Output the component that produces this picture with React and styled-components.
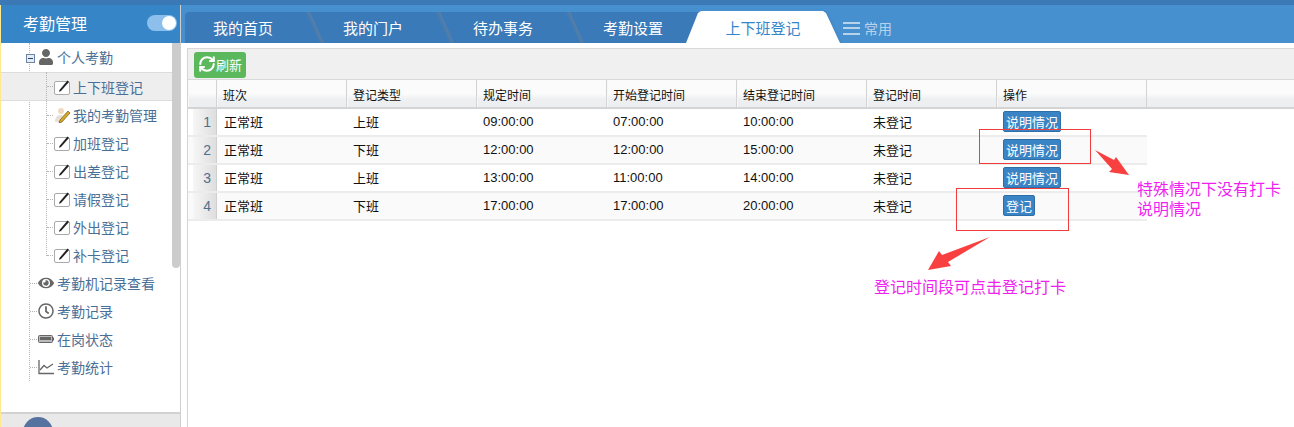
import React from "react";
import styled, { createGlobalStyle } from "styled-components";
import { RefreshCw } from "lucide-react";
import { FaUser, FaEye, FaRegClock } from "react-icons/fa";

const GlobalStyle = createGlobalStyle`
  html, body {
    margin: 0;
    padding: 0;
    overflow: hidden;
    background: #fff;
    font-family: "Liberation Sans", "Noto Sans CJK SC", sans-serif;
  }
  * { box-sizing: border-box; }
`;

const Page = styled.div`
  position: relative;
  width: 1294px;
  height: 427px;
  overflow: hidden;
  background: #fff;
`;

const TopStrip = styled.div`
  height: 5px;
  background: #3b79b6;
`;

const Body = styled.div`
  display: flex;
  height: 422px;
`;

const Sidebar = styled.aside`
  position: relative;
  width: 181px;
  flex: none;
  display: flex;
  flex-direction: column;
  border-left: 1px solid #ffe98f;
  border-right: 1px solid #cfcfcf;
`;

const SideHead = styled.div`
  height: 38px;
  flex: none;
  display: flex;
  align-items: center;
  justify-content: space-between;
  padding: 0 3px 2px 22px;
  background: #3585c7;
  color: #fff;
  font-size: 16px;
`;

const Toggle = styled.span`
  position: relative;
  width: 30px;
  height: 16px;
  border-radius: 8px;
  background: #8cbfeb;
  &::after {
    content: "";
    position: absolute;
    right: 1px;
    top: 1px;
    width: 14px;
    height: 14px;
    border-radius: 50%;
    background: #fff;
  }
`;

const Tree = styled.div`
  position: relative;
  flex: 1;
  &::before {
    content: "";
    position: absolute;
    left: 28px;
    top: 0;
    height: 338px;
    border-left: 1px dotted #b5b5b5;
  }
  &::after {
    content: "";
    position: absolute;
    left: 45px;
    top: 29px;
    height: 184px;
    border-left: 1px dotted #b5b5b5;
  }
`;

const Scroll = styled.div`
  position: absolute;
  right: 0;
  top: 0;
  width: 8px;
  height: 225px;
  border-radius: 0 0 4px 4px;
  background: #cccccc;
  z-index: 2;
`;

const Node = styled.div`
  position: relative;
  height: ${(p) => (p.$active ? "29px" : "28px")};
  margin-top: ${(p) => (p.$active ? "1px" : "0")};
  display: flex;
  align-items: center;
  gap: 3px;
  padding-left: ${(p) => (p.$child ? "53px" : "37px")};
  color: #4a6f96;
  font-size: 14px;
  white-space: nowrap;
  background: ${(p) => (p.$active ? "#eeeeee" : "transparent")};
  ${(p) =>
    p.$active &&
    `
    box-shadow: inset 0 1px 0 #dcdcdc, inset 0 -1px 0 #dcdcdc;
  `}
  &::before {
    content: "";
    position: absolute;
    left: ${(p) => (p.$child ? "46px" : "29px")};
    top: 14px;
    width: ${(p) => (p.$child ? "6px" : "7px")};
    border-top: ${(p) => (p.$root ? "0" : "1px dotted #b5b5b5")};
  }
`;

const Expander = styled.span`
  position: absolute;
  left: 25px;
  top: 11px;
  width: 9px;
  height: 9px;
  border: 1px solid #6d83a3;
  background: #e6ecf5;
  z-index: 1;
  &::after {
    content: "";
    position: absolute;
    left: 1px;
    right: 1px;
    top: 3px;
    height: 1px;
    background: #26426e;
  }
`;

const SideFoot = styled.div`
  position: relative;
  height: 15px;
  flex: none;
  overflow: hidden;
  background: #e9e9e9;
  border-top: 2px solid #d2d2d2;
`;

const Avatar = styled.span`
  position: absolute;
  left: 22px;
  top: 3px;
  width: 30px;
  height: 30px;
  border-radius: 50%;
  background: #56729f;
`;

const Main = styled.main`
  flex: 1;
  min-width: 0;
  display: flex;
  flex-direction: column;
`;

const TabBar = styled.nav`
  height: 38px;
  flex: none;
  display: flex;
  align-items: flex-end;
  padding-left: 4px;
  background: #4790d0;
`;

const Tab = styled.div`
  position: relative;
  width: 130px;
  height: 31px;
  display: flex;
  align-items: center;
  justify-content: center;
  padding-right: 14px;
  color: #fff;
  font-size: 15px;
  background: #3b7ab8;
  &:first-child {
    border-top-left-radius: 4px;
  }
  /* slanted seam between two tabs */
  &::after {
    content: "";
    position: absolute;
    top: 0;
    bottom: 0;
    right: -2px;
    width: 5px;
    transform: skewX(24deg);
    background: linear-gradient(90deg, #3b7ab8, #5a7fa3);
    z-index: 1;
  }
`;

const ActiveTab = styled.div`
  position: relative;
  width: 154px;
  height: 32px;
  margin-left: -19px;
  display: flex;
  align-items: center;
  justify-content: center;
  color: #3585c7;
  font-size: 15px;
  background: #fff;
  z-index: 2;
  clip-path: polygon(0 100%, 12px 2px, 15px 0, 137px 0, 140px 2px, 100% 100%);
`;

const Common = styled.div`
  position: relative;
  display: flex;
  align-items: center;
  gap: 4px;
  height: 30px;
  padding-left: 3px;
  color: #b7d3ec;
  font-size: 14px;
  &::before {
    content: "";
    position: absolute;
    left: -10px;
    top: -2px;
    bottom: 0;
    width: 6px;
    transform: skewX(24deg);
    background: linear-gradient(90deg, #3f80bd, #4790d0);
  }
`;

const MenuLines = styled.span`
  width: 17px;
  height: 13px;
  border-top: 2px solid #b7d3ec;
  border-bottom: 2px solid #b7d3ec;
  position: relative;
  &::after {
    content: "";
    position: absolute;
    left: 0;
    right: 0;
    top: 3.5px;
    height: 2px;
    background: #b7d3ec;
  }
`;

const Content = styled.section`
  flex: 1;
  margin: 5px 0 0 6px;
  border-left: 1px solid #d4d4d4;
  border-top: 1px solid #d9d9d9;
`;

const Toolbar = styled.div`
  height: 31px;
  display: flex;
  align-items: center;
  padding: 2px 0 0 6px;
  background: #f0f0f0;
  border-bottom: 1px solid #d9d9d9;
`;

const RefreshBtn = styled.button`
  display: flex;
  align-items: center;
  height: 26px;
  width: 52px;
  padding: 0 0 2px 4px;
  border: 0;
  border-radius: 3px;
  background: #5cb85c;
  color: #fff;
  font: 13px "Liberation Sans", "Noto Sans CJK SC", sans-serif;
`;

const HeadRow = styled.div`
  display: flex;
  height: 29px;
  background: linear-gradient(#fbfbfb 0 50%, #eeeff1 72%, #eceef0);
  border-bottom: 2px solid #d4d4d4;
`;

const HeadCell = styled.div`
  width: ${(p) => p.$w}px;
  flex: none;
  display: flex;
  align-items: center;
  padding: 2px 0 0 5px;
  font-size: 12px;
  color: #111;
  border-right: 1px solid #d4d4d4;
  border-left: 1px solid #f8f8f8;
`;

const Row = styled.div`
  display: flex;
  width: 959px;
  height: 28px;
  background: ${(p) => (p.$alt ? "#fafafa" : "#fff")};
  border-bottom: 2px solid #ececec;
`;

const NumCell = styled.div`
  flex: none;
  margin-left: 5px;
  width: 24px;
  display: flex;
  align-items: center;
  justify-content: flex-end;
  padding-right: 5px;
  font-size: 14px;
  color: #4f6f8e;
  background: linear-gradient(90deg, #f6f6f6, #dedede);
  border-right: 1px solid #cfcfcf;
`;

const Cell = styled.div`
  width: ${(p) => p.$w}px;
  flex: none;
  display: flex;
  align-items: center;
  padding: 0 0 1px 6px;
  font-size: 13px;
  color: #111;
  &:nth-child(2) {
    padding-left: 7px;
  }
`;

const ActionBtn = styled.button`
  height: 21px;
  padding: 0 2px;
  border: 1px solid #2f6fa8;
  border-radius: 2px;
  background: #3a83c5;
  color: #fff;
  font: 13px "Liberation Sans", "Noto Sans CJK SC", sans-serif;
`;

const RedBox = styled.div`
  position: absolute;
  left: ${(p) => p.$x}px;
  top: ${(p) => p.$y}px;
  width: ${(p) => p.$w}px;
  height: ${(p) => p.$h}px;
  border: 1px solid #f03c3c;
`;

const Arrow = styled.svg`
  position: absolute;
  left: ${(p) => p.$x}px;
  top: ${(p) => p.$y}px;
`;

const Note = styled.div`
  position: absolute;
  left: ${(p) => p.$x}px;
  top: ${(p) => p.$y}px;
  color: #f01ff0;
  font-size: 16px;
  line-height: 20px;
  white-space: nowrap;
`;

const EditIcon = () => (
  <svg width="16" height="16" viewBox="0 0 16 16">
    <rect x="0.5" y="2.5" width="15" height="13" rx="1.5" fill="#fff" stroke="#aaa" />
    <path d="M5.5 11 L13.5 1.5 L15 3 L7 12 L5 12.8 Z" fill="#222" />
  </svg>
);

const ManageIcon = () => (
  <svg width="16" height="16" viewBox="0 0 16 16">
    <circle cx="7" cy="4" r="3" fill="#f0d9c0" />
    <path d="M1 15 C1 9 4 8 7 8 C9 8 10 9 10 10 L7 15 Z" fill="#e6e0d6" />
    <path d="M6 13 L14 4 L16 6 L8 15 L5 16 Z" fill="#d8a722" stroke="#5a4a20" strokeWidth="0.6" />
  </svg>
);

const BatteryIcon = () => (
  <svg width="16" height="16" viewBox="0 0 16 16">
    <rect x="0.5" y="4.5" width="14" height="7" rx="1" fill="#bbb" stroke="#666" />
    <rect x="2" y="6" width="11" height="3" fill="#666" />
    <rect x="15" y="6.5" width="1" height="3" fill="#666" />
  </svg>
);

const ChartIcon = () => (
  <svg width="16" height="16" viewBox="0 0 16 16" fill="none" stroke="#666" strokeWidth="1.3">
    <path d="M1 1 V14.5 H16" />
    <path d="M2 11 L6 6.5 L9 9 L15 5" />
  </svg>
);

const children = ["加班登记", "出差登记", "请假登记", "外出登记", "补卡登记"];
const columns = ["班次", "登记类型", "规定时间", "开始登记时间", "结束登记时间", "登记时间", "操作"];
const rows = [
  ["1", "上班", "09:00:00", "07:00:00", "10:00:00", "说明情况"],
  ["2", "下班", "12:00:00", "12:00:00", "15:00:00", "说明情况"],
  ["3", "上班", "13:00:00", "11:00:00", "14:00:00", "说明情况"],
  ["4", "下班", "17:00:00", "17:00:00", "20:00:00", "登记"],
];

export default function App() {
  return (
    <Page>
      <GlobalStyle />
      <TopStrip />
      <Body>
        <Sidebar>
          <SideHead>
            考勤管理
            <Toggle />
          </SideHead>
          <Tree>
            <Scroll />
            <Node $root>
              <Expander />
              <FaUser size={16} color="#666" />
              个人考勤
            </Node>
            <Node $child $active>
              <EditIcon />
              上下班登记
            </Node>
            <Node $child>
              <ManageIcon />
              我的考勤管理
            </Node>
            {children.map((c) => (
              <Node $child key={c}>
                <EditIcon />
                {c}
              </Node>
            ))}
            <Node>
              <FaEye size={16} color="#666" />
              考勤机记录查看
            </Node>
            <Node>
              <FaRegClock size={16} color="#666" />
              考勤记录
            </Node>
            <Node>
              <BatteryIcon />
              在岗状态
            </Node>
            <Node>
              <ChartIcon />
              考勤统计
            </Node>
          </Tree>
          <SideFoot>
            <Avatar />
          </SideFoot>
        </Sidebar>
        <Main>
          <TabBar>
            <Tab>我的首页</Tab>
            <Tab>我的门户</Tab>
            <Tab>待办事务</Tab>
            <Tab>考勤设置</Tab>
            <ActiveTab>上下班登记</ActiveTab>
            <Common>
              <MenuLines />
              常用
            </Common>
          </TabBar>
          <Content>
            <Toolbar>
              <RefreshBtn>
                <RefreshCw size={18} strokeWidth={2.8} />
                刷新
              </RefreshBtn>
            </Toolbar>
            <HeadRow>
              <HeadCell $w={29} />
              {columns.map((c, i) => (
                <HeadCell $w={i === 6 ? 150 : 130} key={c}>
                  {c}
                </HeadCell>
              ))}
            </HeadRow>
            {rows.map((r, i) => (
              <Row $alt={i % 2 === 1} key={r[0]}>
                <NumCell>{r[0]}</NumCell>
                <Cell $w={130}>正常班</Cell>
                <Cell $w={130}>{r[1]}</Cell>
                <Cell $w={130}>{r[2]}</Cell>
                <Cell $w={130}>{r[3]}</Cell>
                <Cell $w={130}>{r[4]}</Cell>
                <Cell $w={130}>未登记</Cell>
                <Cell $w={149}>
                  <ActionBtn>{r[5]}</ActionBtn>
                </Cell>
              </Row>
            ))}
          </Content>
        </Main>
      </Body>

      <RedBox $x={979} $y={129} $w={112} $h={35} />
      <RedBox $x={956} $y={188} $w={113} $h={43} />
      <Arrow $x={1094} $y={148} width="36" height="28" viewBox="0 0 36 28">
        <path d="M1 2 L20 12 L22 9 L35 27 L15 24 L18 21 Z" fill="#f84040" />
      </Arrow>
      <Arrow $x={926} $y={236} width="66" height="36" viewBox="0 0 66 36">
        <path d="M64 1 L22 26 L25 30 L2 34 L13 15 L16 19 Z" fill="#f84040" />
      </Arrow>
      <Note $x={1137} $y={180}>
        特殊情况下没有打卡
        <br />
        说明情况
      </Note>
      <Note $x={874} $y={278}>
        登记时间段可点击登记打卡
      </Note>
    </Page>
  );
}
